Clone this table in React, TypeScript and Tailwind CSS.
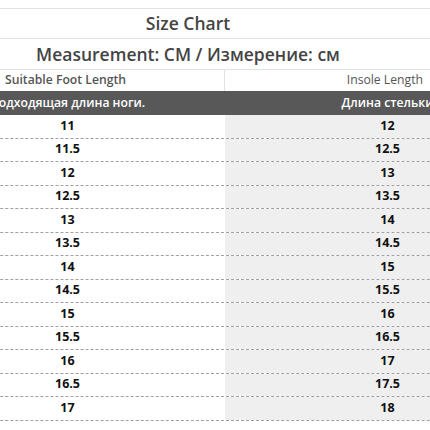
import React from "react";

const rows = [
  ["11", "12"],
  ["11.5", "12.5"],
  ["12", "13"],
  ["12.5", "13.5"],
  ["13", "14"],
  ["13.5", "14.5"],
  ["14", "15"],
  ["14.5", "15.5"],
  ["15", "16"],
  ["15.5", "16.5"],
  ["16", "17"],
  ["16.5", "17.5"],
  ["17", "18"],
];

export default function App() {
  return (
    <div
      className="w-[430px] h-[430px] overflow-hidden bg-white text-[#444]"
      style={{ fontFamily: '"Open Sans", "Liberation Sans", sans-serif' }}
    >
      <div className="h-[8px]" />
      {/* Title rows */}
      <div className="h-[30px] border-t border-[#e2e2e2] flex items-center justify-center pr-[54px] text-[17.5px] font-semibold">
        Size Chart
      </div>
      <div className="h-[31px] border-t border-[#e2e2e2] flex items-center justify-center pr-[54px] text-[17.5px] font-semibold">
        Measurement: CM / Измерение: см
      </div>

      {/* Column header */}
      <div className="h-[22px] border-t border-[#e2e2e2] flex text-[12.2px] text-[#555]">
        <div className="w-[225px] border-r border-[#e2e2e2] pl-[5px] flex items-center font-semibold">
          Suitable Foot Length
        </div>
        <div className="flex-1 flex items-center justify-end pr-[7px]">
          Insole Length
        </div>
      </div>

      {/* Table body, wider than the window */}
      <div className="ml-[-90px] w-[640px]">
        <div className="h-[24px] bg-[#585858] text-white flex text-[12.2px] font-semibold">
          <div className="w-[315px] flex items-center justify-center">Подходящая длина ноги.</div>
          <div className="flex-1 flex items-center justify-center">Длина стельки</div>
        </div>
        {rows.map(([a, b]) => (
          <div
            key={a}
            className="h-[23.5px] flex border-b border-dashed border-[#a0a0a0] text-[12.5px] font-bold text-[#111]"
          >
            <div className="w-[315px] flex items-center justify-center">{a}</div>
            <div className="flex-1 bg-[#efefef] flex items-center justify-center">{b}</div>
          </div>
        ))}
      </div>
    </div>
  );
}
